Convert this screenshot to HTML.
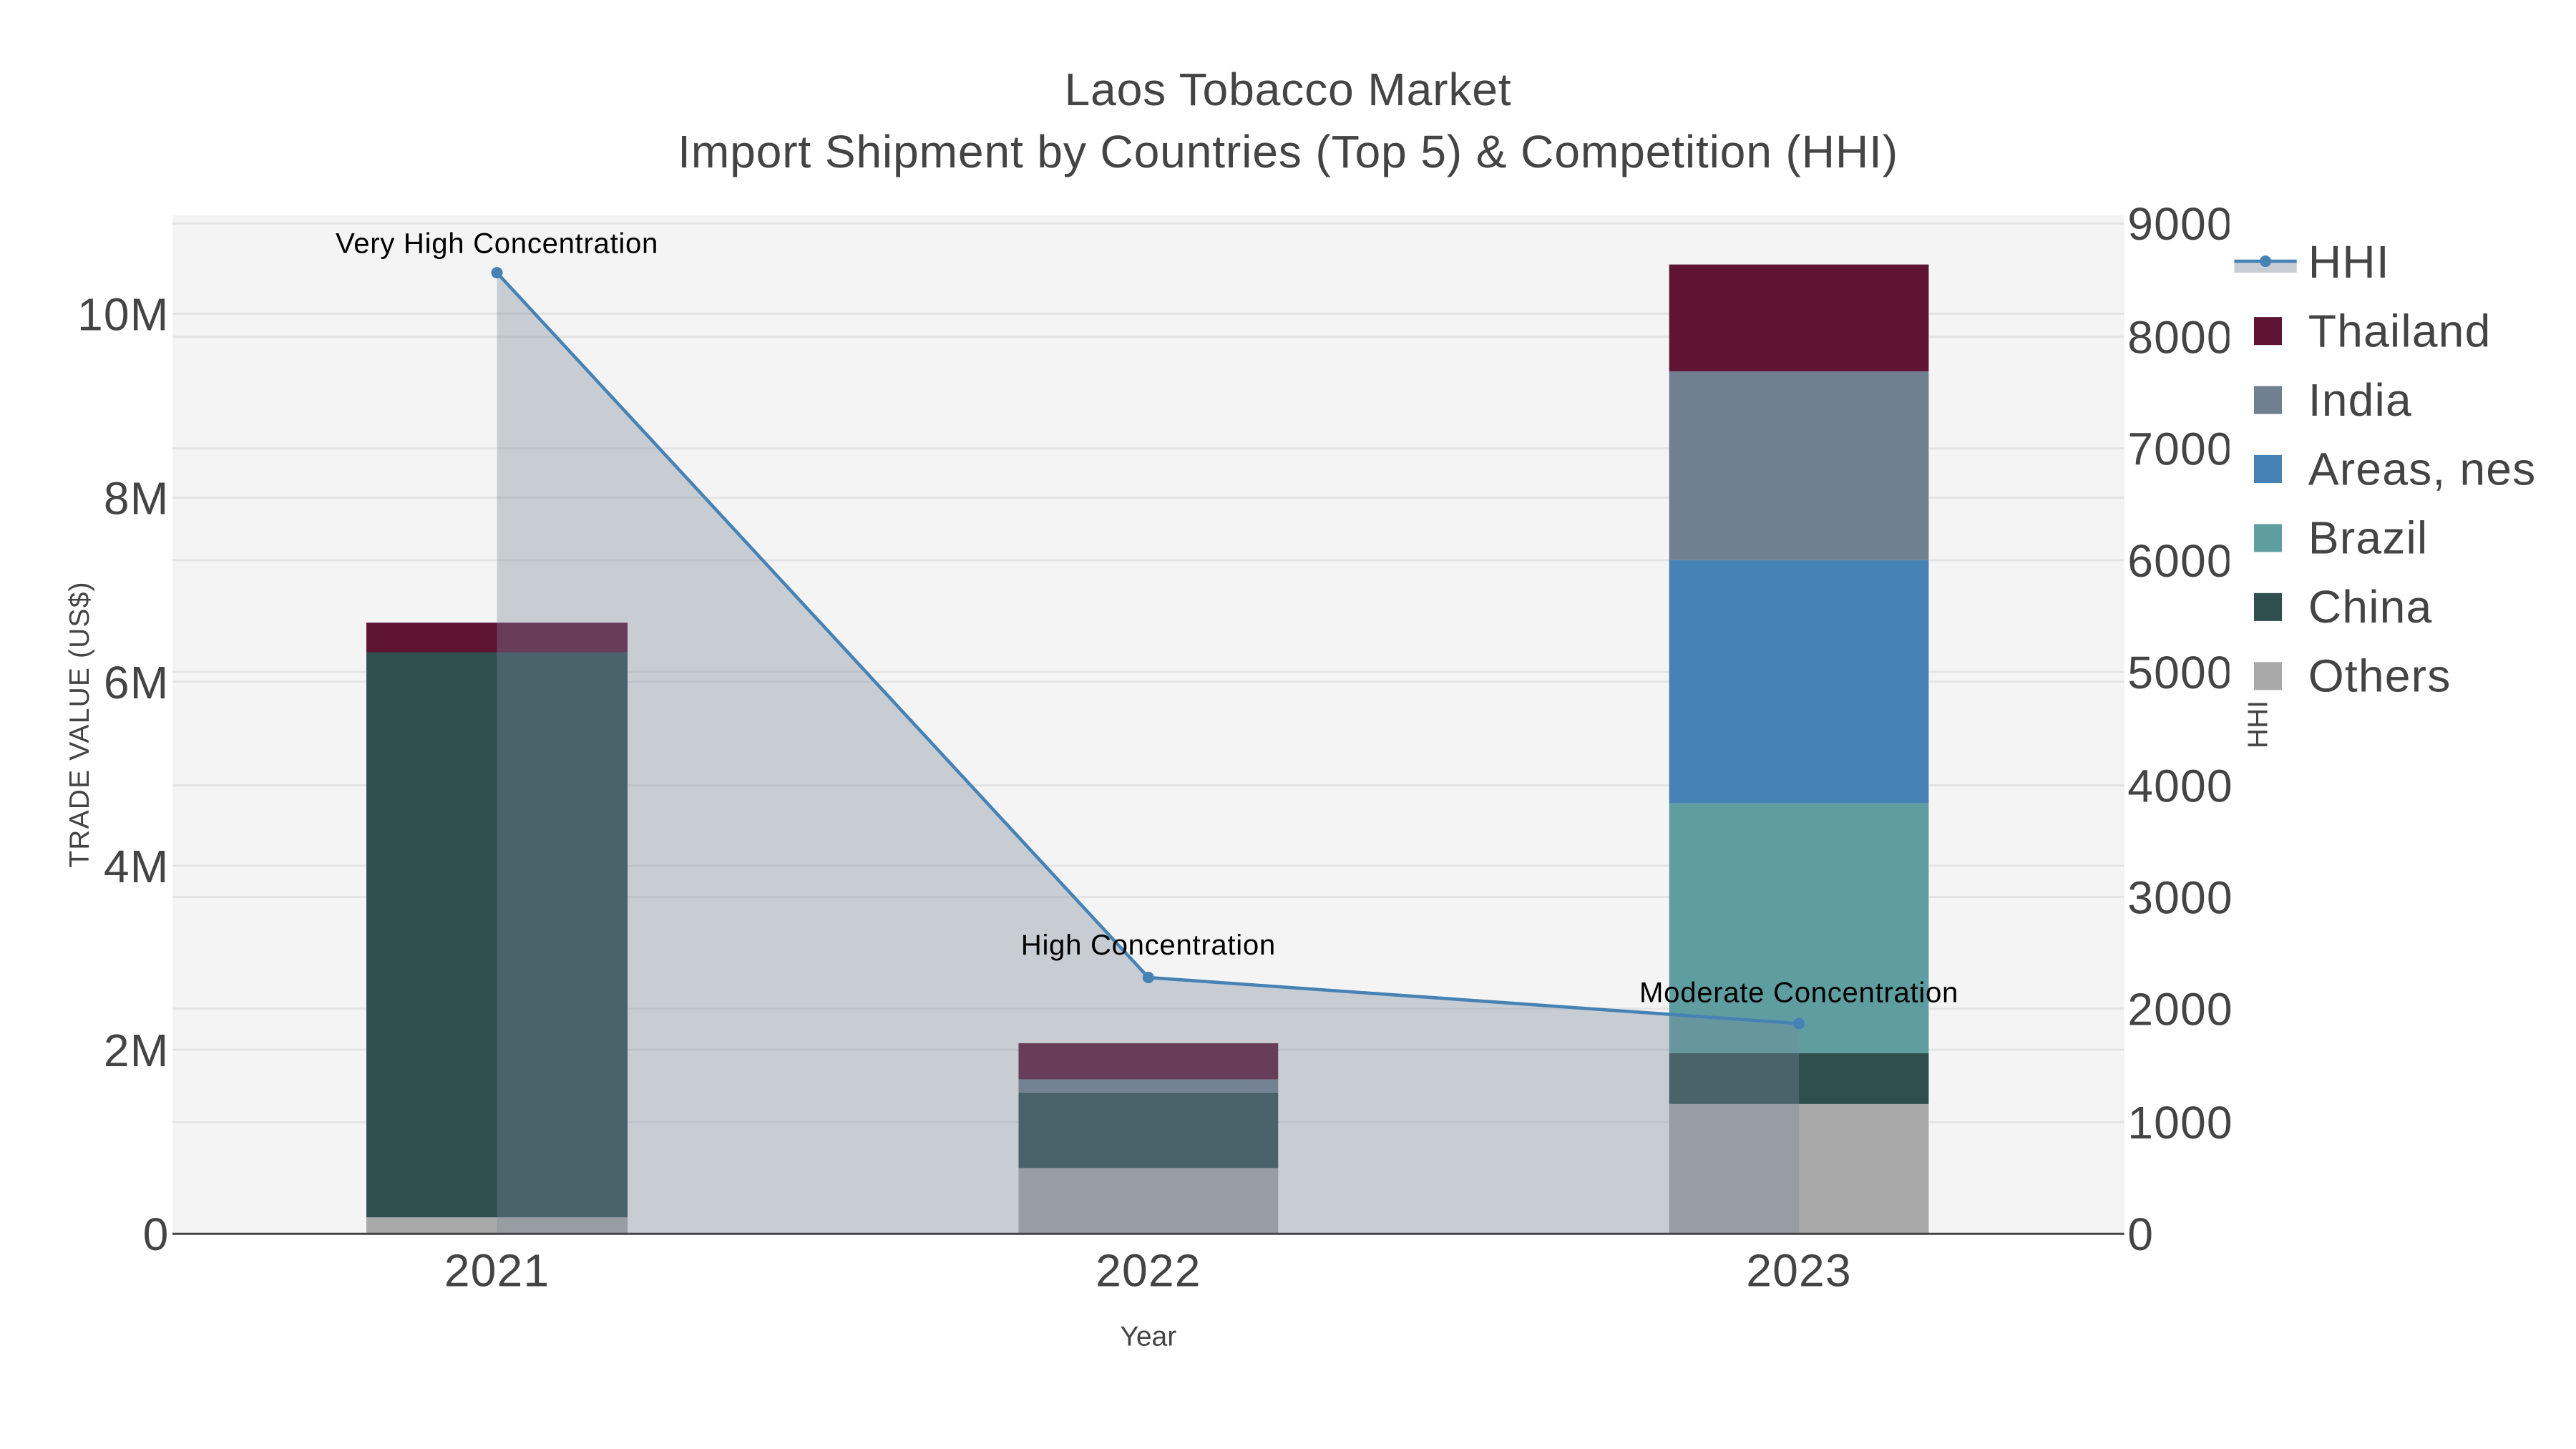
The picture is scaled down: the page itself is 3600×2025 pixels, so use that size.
<!DOCTYPE html>
<html><head><meta charset="utf-8"><style>
html,body{margin:0;padding:0;background:#fff;}
svg{display:block;}
text{font-family:"Liberation Sans",sans-serif;}
</style></head><body>
<svg width="3600" height="2025" viewBox="0 0 1568 882" xmlns="http://www.w3.org/2000/svg">
<rect x="0" y="0" width="1568" height="882" fill="#fff"/>
<rect x="105" y="131" width="1188" height="620" fill="#f4f4f4"/>
<g stroke="#e4e4e4" stroke-width="1.3">
<line x1="105" x2="1293" y1="191" y2="191"/><line x1="105" x2="1293" y1="303" y2="303"/>
<line x1="105" x2="1293" y1="415" y2="415"/><line x1="105" x2="1293" y1="527" y2="527"/>
<line x1="105" x2="1293" y1="639" y2="639"/>
<line x1="105" x2="1293" y1="683" y2="683"/><line x1="105" x2="1293" y1="614" y2="614"/>
<line x1="105" x2="1293" y1="546" y2="546"/><line x1="105" x2="1293" y1="478" y2="478"/>
<line x1="105" x2="1293" y1="409" y2="409"/><line x1="105" x2="1293" y1="341" y2="341"/>
<line x1="105" x2="1293" y1="273" y2="273"/><line x1="105" x2="1293" y1="205" y2="205"/>
<line x1="105" x2="1293" y1="136" y2="136"/>
</g>
<rect x="223" y="741" width="159" height="10" fill="#a9a9a9"/>
<rect x="223" y="397" width="159" height="344" fill="#2f4f4f"/>
<rect x="223" y="379" width="159" height="18" fill="#5f1434"/>
<rect x="620" y="711" width="158" height="40" fill="#a9a9a9"/>
<rect x="620" y="665" width="158" height="46" fill="#2f4f4f"/>
<rect x="620" y="657" width="158" height="8" fill="#708090"/>
<rect x="620" y="635" width="158" height="22" fill="#5f1434"/>
<rect x="1016" y="672" width="158" height="79" fill="#a9a9a9"/>
<rect x="1016" y="641" width="158" height="31" fill="#2f4f4f"/>
<rect x="1016" y="489" width="158" height="152" fill="#5f9ea0"/>
<rect x="1016" y="341" width="158" height="148" fill="#4682b4"/>
<rect x="1016" y="226" width="158" height="115" fill="#708090"/>
<rect x="1016" y="161" width="158" height="65" fill="#5f1434"/>
<polygon points="302.5,166 699,595 1095,623 1095,751 302.5,751" fill="rgba(122,136,155,0.36)"/>
<polyline points="302.5,166 699,595 1095,623" fill="none" stroke="#4682b4" stroke-width="2"/>
<circle cx="302.5" cy="166" r="3.5" fill="#4682b4"/>
<circle cx="699" cy="595" r="3.5" fill="#4682b4"/>
<circle cx="1095" cy="623" r="3.5" fill="#4682b4"/>
<line x1="105" x2="1293" y1="751" y2="751" stroke="#444" stroke-width="1.3"/>
<g font-size="17.5" fill="#000" text-anchor="middle" letter-spacing="0.3">
<text x="302.5" y="154">Very High Concentration</text>
<text x="699" y="581">High Concentration</text>
<text x="1095" y="610">Moderate Concentration</text>
</g>
<g font-size="28" fill="#444" text-anchor="end" letter-spacing="0.5">
<text x="103" y="761">0</text><text x="103" y="649">2M</text><text x="103" y="537">4M</text>
<text x="103" y="425">6M</text><text x="103" y="313">8M</text><text x="103" y="201">10M</text>
</g>
<g font-size="28" fill="#444" letter-spacing="0.5">
<text x="1295" y="761">0</text><text x="1295" y="693">1000</text><text x="1295" y="624">2000</text>
<text x="1295" y="556">3000</text><text x="1295" y="488">4000</text><text x="1295" y="419">5000</text>
<text x="1295" y="351">6000</text><text x="1295" y="283">7000</text><text x="1295" y="215">8000</text>
<text x="1295" y="146">9000</text>
</g>
<rect x="1357" y="120" width="211" height="310" fill="#fff"/>
<g font-size="28" fill="#444" text-anchor="middle" letter-spacing="0.5">
<text x="302.5" y="783">2021</text><text x="699" y="783">2022</text><text x="1095" y="783">2023</text>
</g>
<text x="699" y="819" font-size="17" fill="#444" text-anchor="middle">Year</text>
<text transform="translate(54,441) rotate(-90)" font-size="17" fill="#444" text-anchor="middle" letter-spacing="0.5">TRADE VALUE (US$)</text>
<text transform="translate(1380,441) rotate(-90)" font-size="17" fill="#444" text-anchor="middle">HHI</text>
<text x="784" y="64" font-size="28" fill="#444" text-anchor="middle" letter-spacing="0.35">Laos Tobacco Market</text>
<text x="784" y="102" font-size="28" fill="#444" text-anchor="middle" letter-spacing="0.35">Import Shipment by Countries (Top 5) &amp; Competition (HHI)</text>
<rect x="1360" y="160" width="38" height="6" fill="#c8cdd4"/>
<line x1="1360" x2="1398" y1="159" y2="159" stroke="#4682b4" stroke-width="2"/>
<circle cx="1379" cy="159" r="3.5" fill="#4682b4"/>
<g font-size="28" fill="#444" letter-spacing="0.5">
<text x="1405" y="169">HHI</text>
<text x="1405" y="211">Thailand</text>
<text x="1405" y="253">India</text>
<text x="1405" y="295">Areas, nes</text>
<text x="1405" y="337">Brazil</text>
<text x="1405" y="379">China</text>
<text x="1405" y="421">Others</text>
</g>
<rect x="1372" y="193" width="17" height="17" fill="#5f1434"/>
<rect x="1372" y="235" width="17" height="17" fill="#708090"/>
<rect x="1372" y="277" width="17" height="17" fill="#4682b4"/>
<rect x="1372" y="319" width="17" height="17" fill="#5f9ea0"/>
<rect x="1372" y="361" width="17" height="17" fill="#2f4f4f"/>
<rect x="1372" y="403" width="17" height="17" fill="#a9a9a9"/>
</svg>
</body></html>
